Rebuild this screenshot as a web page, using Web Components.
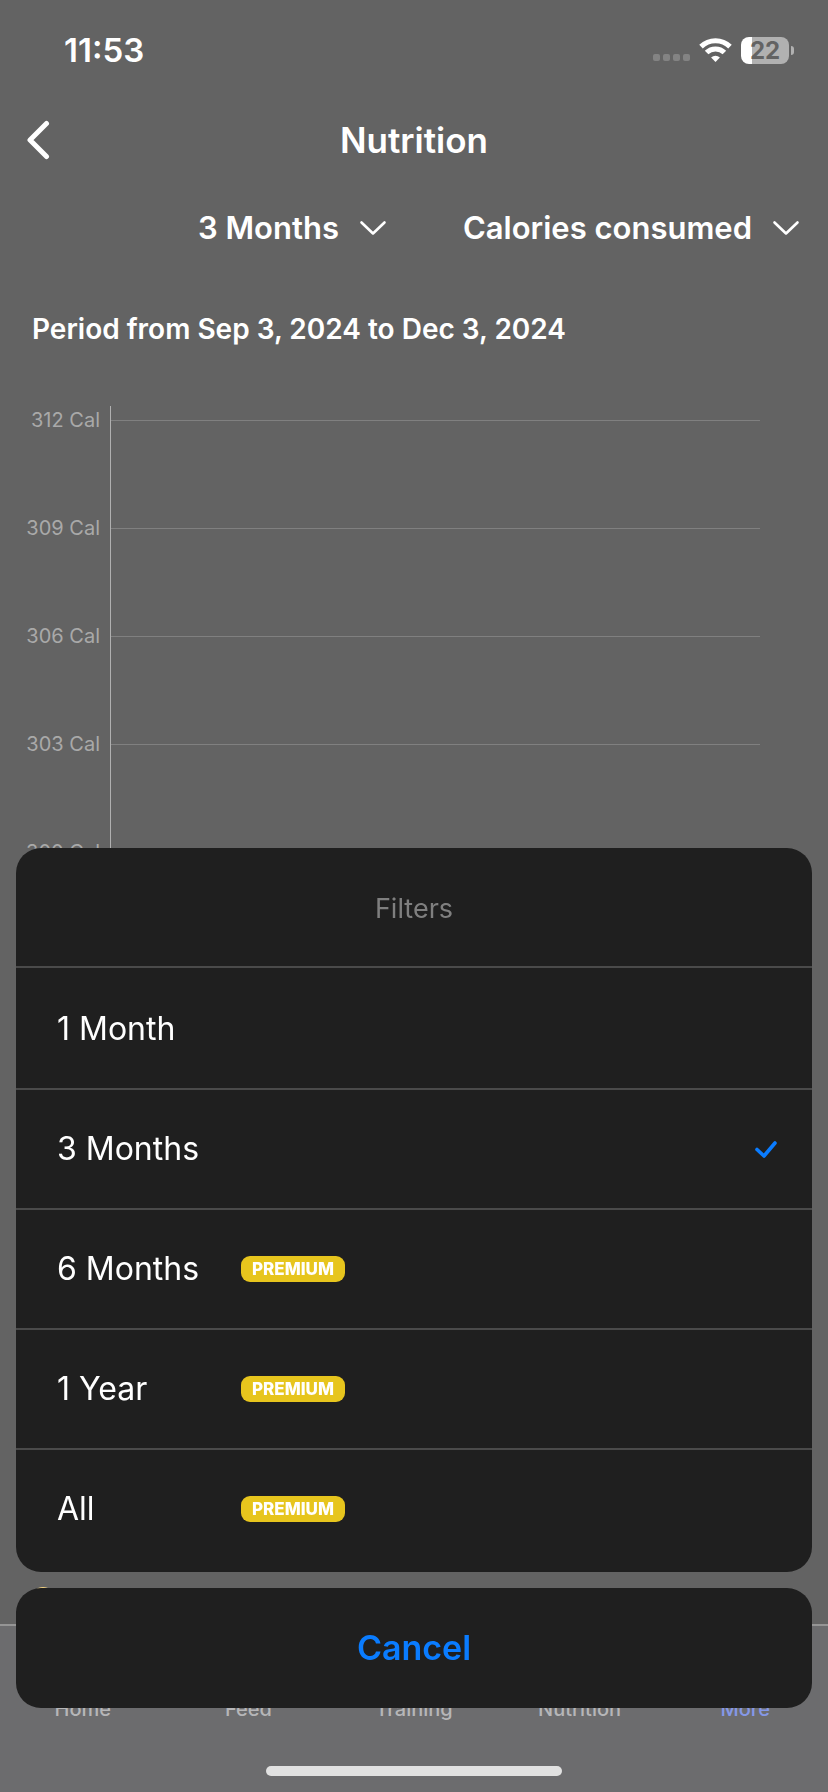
<!DOCTYPE html>
<html lang="en">
<head>
<meta charset="utf-8">
<meta name="viewport" content="width=device-width, initial-scale=1">
<title>Nutrition</title>
<style>
  body { margin: 0; background: #636363; color: #fff; font-family: Inter, "Liberation Sans", sans-serif; }
</style>
</head>
<body>
<nutrition-screen></nutrition-screen>

<script>
const define = (name, html, setup) => {
  const template = document.createElement('template');
  template.innerHTML = '<style>*{box-sizing:border-box}button{font:inherit;color:inherit;background:none;border:0;padding:0;margin:0;cursor:pointer}svg{display:block}</style>' + html;
  customElements.define(name, class extends HTMLElement {
    constructor() {
      super();
      this.attachShadow({ mode: 'open' }).append(template.content.cloneNode(true));
    }
    connectedCallback() { if (setup) setup(this, this.shadowRoot); }
  });
};

define('status-bar', `
  <style>
    :host { display: flex; align-items: center; justify-content: space-between; height: 100px; padding: 0 34px 0 64px; }
    .time { font-size: 33px; line-height: 40px; font-weight: 600; }
    .icons { display: flex; align-items: center; gap: 9px; }
    .dots { display: flex; gap: 3px; padding-top: 15px; }
    .dots i { width: 7px; height: 7px; border-radius: 2px; background: #838383; }
    .battery { display: flex; align-items: center; gap: 2px; }
    .cell { width: 48px; height: 27px; border-radius: 8px; background: linear-gradient(to right, #fff 11px, #b1b1b1 11px);
      color: #636363; font-size: 24px; line-height: 27px; font-weight: 700; text-align: center; }
    .cap { width: 3px; height: 9px; border-radius: 0 4px 4px 0; background: #b1b1b1; }
  </style>
  <span class="time">11:53</span>
  <div class="icons">
    <div class="dots"><i></i><i></i><i></i><i></i></div>
    <svg width="33" height="25" viewBox="0 0 33 25" fill="none" stroke="#fff" stroke-width="5">
      <path d="M2 8.600a20.600 20.600 0 0 1 29 0"/>
      <path d="M7.600 14.600a12.600 12.600 0 0 1 17.800 0"/>
      <path d="M16.500 24l-4.400-4.500a6.200 6.200 0 0 1 8.800 0z" fill="#fff" stroke="none"/>
    </svg>
    <div class="battery"><span class="cell">22</span><span class="cap"></span></div>
  </div>`);

define('nav-header', `
  <style>
    :host { display: grid; grid-template-columns: 80px 1fr 80px; align-items: center; height: 80px; }
    button { padding-left: 26px; }
    h1 { margin: 0; font-size: 35px; line-height: 44px; font-weight: 600; text-align: center; }
  </style>
  <button aria-label="Back"><svg width="24" height="40" viewBox="0 0 24 40" fill="none" stroke="#fff" stroke-width="5" stroke-linecap="round" stroke-linejoin="round"><path d="M20.500 3.500L4 20l16.500 16.500"/></svg></button>
  <h1><slot></slot></h1>`);

define('filter-button', `
  <style>
    :host { display: block; }
    button { display: flex; align-items: center; gap: 20px; font-size: 31px; line-height: 40px; font-weight: 600; }
  </style>
  <button aria-haspopup="dialog"><slot></slot>
    <svg width="28" height="16" viewBox="0 0 28 16" fill="none" stroke="#fff" stroke-width="2.600" stroke-linecap="round" stroke-linejoin="round"><path d="M2.500 2.500L14 13.500 25.500 2.500"/></svg>
  </button>`);

define('chart-row', `
  <style>
    :host { display: flex; align-items: center; height: 108px; }
    span { width: 111px; padding-right: 11px; text-align: right; font-size: 20px; line-height: 24px; color: #a9a9a9; flex: none; }
    i { flex: 1; height: 1px; background: #808080; }
  </style>
  <span><slot></slot></span><i></i>`);

define('calorie-chart', `
  <style>
    :host { display: grid; padding: 14px 68px 0 0; grid-template-columns: 1fr; position: relative; }
    .rows { display: flex; flex-direction: column; margin-top: -54px; }
    .axis { position: absolute; left: 110px; top: 0; bottom: 54px; width: 1px; background: #b0b0b0; }
  </style>
  <div class="rows"><slot></slot></div><div class="axis"></div>`);

define('chart-legend', `
  <style>
    :host { display: flex; align-items: center; gap: 8px; padding: 0 32px; font-size: 21px; line-height: 24px; color: #c4c4c4; }
    i { width: 22px; height: 22px; border-radius: 50%; background: #f0d080; }
  </style>
  <i></i><slot></slot>`);

define('tab-bar', `
  <style>
    :host { display: block; height: 168px; background: #6c6c6e; border-top: 2px solid #959595; }
    nav { display: grid; grid-template-columns: repeat(5, 1fr); padding-top: 71px; }
    a { text-align: center; text-decoration: none; color: #b6b6b8; font-size: 20px; line-height: 24px; font-weight: 500; }
    a[aria-current] { color: #8598e8; }
    .home { width: 296px; height: 10px; margin: 45px auto 0; border-radius: 5px; background: #e1e1e1; }
  </style>
  <nav><a href="#home">Home</a><a href="#feed">Feed</a><a href="#training">Training</a><a href="#nutrition">Nutrition</a><a href="#more" aria-current="page">More</a></nav>
  <div class="home"></div>`);

define('sheet-option', `
  <style>
    :host { display: block; border-top: 2px solid #4a4a4a; }
    button { display: grid; grid-template-columns: 184px 1fr auto; align-items: center; width: 100%; height: 118px; padding: 0 34px 0 41px; text-align: left; font-size: 32px; line-height: 40px; }
    .badge { justify-self: start; padding: 0 11px; border-radius: 9px; background: #e7c51d; font-size: 17px; line-height: 26px; font-weight: 800; }
    .badge, svg { display: none; }
    :host([premium]) .badge, :host([selected]) svg { display: block; }
    svg { grid-column: 3; }
  </style>
  <button><span><slot></slot></span><span class="badge">PREMIUM</span>
    <svg width="24" height="18" viewBox="0 0 24 18" fill="none" stroke="#0a7cff" stroke-width="3.600" stroke-linecap="round" stroke-linejoin="round"><path d="M3 9.500L10 16 21 3"/></svg>
  </button>`,
  (host, root) => root.querySelector('button').setAttribute('aria-pressed', host.hasAttribute('selected')));

define('action-sheet', `
  <style>
    :host { position: fixed; left: 16px; right: 16px; bottom: 84px; display: flex; flex-direction: column; gap: 16px; }
    .panel, .cancel { background: #1f1f1f; border-radius: 25px; overflow: hidden; }
    .panel { padding-bottom: 4px; }
    h2 { margin: 0; padding: 41px 0 37px; color: #7f7f7f; font-size: 27px; line-height: 40px; font-weight: 400; text-align: center; }
    ::slotted(:first-of-type) { padding-top: 2px; }
    .cancel { height: 120px; color: #0a7cff; font-size: 34px; line-height: 44px; font-weight: 600; }
  </style>
  <div class="panel" role="dialog" aria-labelledby="title"><h2 id="title">Filters</h2><slot></slot></div>
  <button class="cancel">Cancel</button>`);

define('nutrition-screen', `
  <style>
    :host { display: flex; flex-direction: column; min-height: 100vh; }
    .filters { display: flex; justify-content: flex-end; gap: 76px; padding: 28px 28px 0; }
    h2 { margin: 0; padding: 64px 32px 60px; font-size: 28px; line-height: 34px; font-weight: 600; }
    chart-legend { margin-top: auto; padding-bottom: 14px; }
  </style>
  <status-bar></status-bar>
  <nav-header>Nutrition</nav-header>
  <div class="filters"><filter-button>3 Months</filter-button><filter-button>Calories consumed</filter-button></div>
  <h2>Period from Sep 3, 2024 to Dec 3, 2024</h2>
  <calorie-chart>
    <chart-row>312 Cal</chart-row><chart-row>309 Cal</chart-row><chart-row>306 Cal</chart-row><chart-row>303 Cal</chart-row><chart-row>300 Cal</chart-row>
  </calorie-chart>
  <chart-legend>Calories consumed</chart-legend>
  <tab-bar></tab-bar>
  <action-sheet>
    <sheet-option>1 Month</sheet-option>
    <sheet-option selected>3 Months</sheet-option>
    <sheet-option premium>6 Months</sheet-option>
    <sheet-option premium>1 Year</sheet-option>
    <sheet-option premium>All</sheet-option>
  </action-sheet>`);
</script>
</body>
</html>
